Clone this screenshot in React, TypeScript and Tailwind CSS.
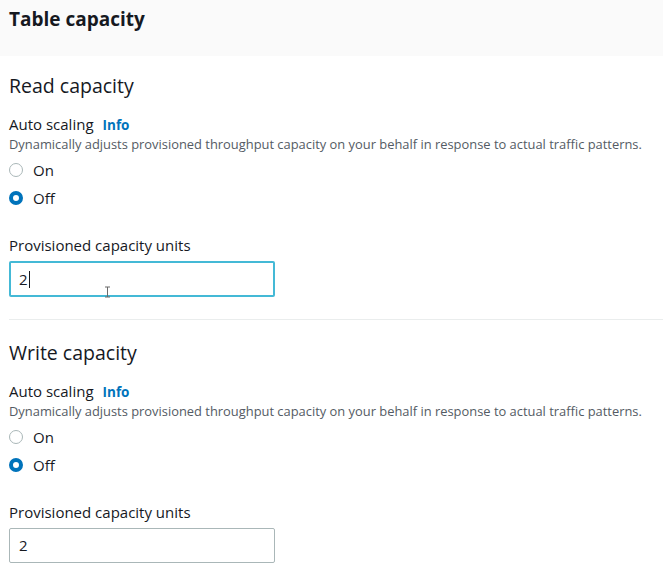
import React from "react"

const Radio = ({ checked, label }: { checked?: boolean; label: string }) => (
    <div className="flex h-[28px] items-center gap-[10px]">
        {checked ? (
            <span className="box-border h-[14px] w-[14px] rounded-full border-[4px] border-[#0073bb] bg-white" />
        ) : (
            <span className="box-border h-[14px] w-[14px] rounded-full border border-[#aab7b8] bg-white" />
        )}
        <span className="text-[15px] leading-[20px] text-[#16191f]">{label}</span>
    </div>
)

const CapacitySection = ({ title, focused }: { title: string; focused?: boolean }) => (
    <div className="px-[9px]">
        <h2 className="text-[19.5px] leading-[24px] text-[#16191f]">{title}</h2>
        <div className="mt-[16px] flex items-baseline gap-[9px] text-[15px] leading-[20px] text-[#16191f]">
            <span>Auto scaling</span>
            <span className="text-[13.5px] font-bold text-[#0073bb]">Info</span>
        </div>
        <p className="text-[12.9px] leading-[18px] text-[#545b64]">
            Dynamically adjusts provisioned throughput capacity on your behalf in response to actual traffic patterns.
        </p>
        <div className="mt-[3px] flex flex-col">
            <Radio label="On" />
            <Radio label="Off" checked />
        </div>
        <div className="mt-[23px] text-[15px] leading-[20px] text-[#16191f]">Provisioned capacity units</div>
        {focused ? (
            <div className="relative mt-[6px] box-border flex h-[36px] w-[266px] items-center rounded-[2px] border-2 border-[#44b9d6] px-[8px] text-[15px] text-[#16191f]">
                <span>2</span>
                <span className="ml-[1px] h-[17px] w-px bg-[#16191f]" />
                <svg className="absolute left-[93px] top-[23px]" width="7" height="12" viewBox="0 0 7 12">
                    <path d="M1 1h5M3.5 1v10M1 11h5" stroke="#6b6b6b" strokeWidth="1" fill="none" />
                </svg>
            </div>
        ) : (
            <div className="mt-[6px] box-border flex h-[35px] w-[266px] items-center rounded-[2px] border border-[#aab7b8] px-[9px] text-[15px] text-[#16191f]">
                2
            </div>
        )}
    </div>
)

export default function App() {
    return (
        <div className="min-h-[571px] w-[663px] bg-white" style={{ fontFamily: '"Open Sans", "Noto Sans", sans-serif' }}>
            <div className="h-[56px] bg-[#fafafa] px-[9px] pt-[7px]">
                <h1 className="text-[19px] font-bold leading-[24px] text-[#16191f]">Table capacity</h1>
            </div>
            <div className="pt-[18px]">
                <CapacitySection title="Read capacity" focused />
            </div>
            <div className="ml-[9px] mt-[22px] border-t border-[#eaeded]" />
            <div className="pt-[21px]">
                <CapacitySection title="Write capacity" />
            </div>
        </div>
    )
}
